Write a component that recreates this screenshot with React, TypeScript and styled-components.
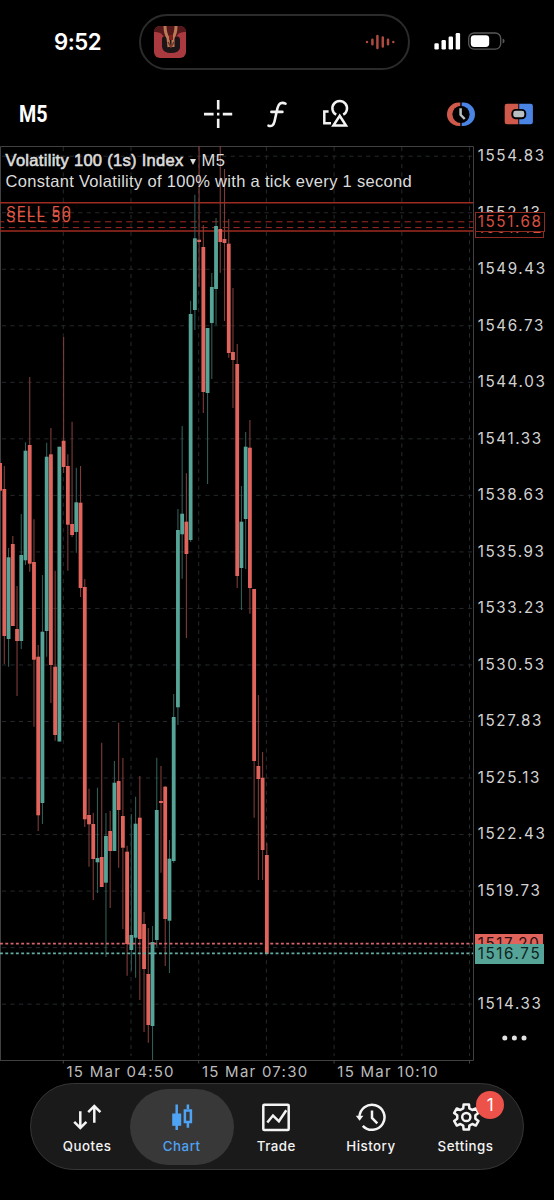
import React from 'react';
import styled, { createGlobalStyle } from 'styled-components';

const GlobalStyle = createGlobalStyle`
  * { box-sizing: border-box; }
  body { margin: 0; background: #000; }
`;

const RED = '#e0645c';
const TEAL = '#56a497';
const ORDER = '#9e2b20';
const TEXT = '#d2d2d2';
const ui = `Inter, Roboto, sans-serif`;

const Screen = styled.div`
  width: 554px;
  height: 1200px;
  background: #000;
  color: #fff;
  font-family: ${ui};
  display: flex;
  flex-direction: column;
  overflow: hidden;
`;

const StatusBar = styled.header`
  height: 82px;
  flex: none;
  display: grid;
  grid-template-columns: 139px 271px 1fr;
  align-items: start;
`;
const Clock = styled.div`
  padding: 27px 0 0 54px;
  font-size: 22.2px;
  line-height: 29px;
  font-weight: 600;
  letter-spacing: -0.5px;
`;
const Island = styled.div`
  height: 56px;
  margin-top: 14px;
  border: 2px solid #2b2b2b;
  border-radius: 28px;
  display: flex;
  align-items: center;
  justify-content: space-between;
  padding: 0 13px;
`;
const StatusIcons = styled.div`
  padding: 31px 0 0 24px;
`;

const Toolbar = styled.nav`
  height: 64px;
  flex: none;
  display: flex;
  align-items: center;
  padding-left: 19px;
`;
const Timeframe = styled.div`
  width: 183px;
  font: 700 24px/30px Roboto, sans-serif;
  transform: scaleX(0.82);
  transform-origin: left center;
`;
const ToolIcon = styled.svg<{ $gap?: number }>`
  display: block;
  flex: none;
  width: 32px;
  height: 32px;
  margin-left: ${(p) => p.$gap ?? 0}px;
`;

const ChartRow = styled.main`
  height: 915px;
  flex: none;
  display: grid;
  grid-template-columns: 474px 80px;
`;
const Plot = styled.section`
  position: relative;
`;
const PlotSvg = styled.svg`
  display: block;
`;
const Heading = styled.div`
  position: absolute;
  left: 5.5px;
  top: 4px;
  font: 16.5px/21px 'Liberation Sans', Arial, sans-serif;
  color: #dcdcdc;
  white-space: nowrap;
`;
const Title = styled.div`
  display: flex;
  align-items: center;
  letter-spacing: 0.3px;
`;
const Symbol = styled.span`
  -webkit-text-stroke: 0.6px #dcdcdc;
`;
const Caret = styled.span`
  margin: 3px 6px 0 6px;
  border: 3.5px solid transparent;
  border-top: 6px solid #dcdcdc;
  border-bottom: 0;
`;
const Description = styled.div`
  letter-spacing: 0.31px;
`;
const OrderLabel = styled.div<{ $top: number }>`
  position: absolute;
  left: 6px;
  top: ${(p) => p.$top}px;
  font-size: 15px;
  line-height: 20px;
  letter-spacing: 1.1px;
  color: #dc5443;
`;

const PriceAxis = styled.aside`
  position: relative;
`;
const PriceLabel = styled.div<{ $first?: boolean }>`
  height: ${(p) => (p.$first ? 38.26 : 56.53)}px;
  display: flex;
  align-items: ${(p) => (p.$first ? 'flex-start' : 'center')};
  padding-left: 3.7px;
  font-size: 15.2px;
  line-height: 20px;
  letter-spacing: 1.6px;
  color: ${TEXT};
`;
const PriceTag = styled.div<{ $top: number; $bg: string; $fg: string; $border: string; $width?: number }>`
  position: absolute;
  left: 1px;
  top: ${(p) => p.$top}px;
  width: ${(p) => p.$width ?? 69}px;
  height: 20px;
  padding-left: 1.7px;
  border: 1px solid ${(p) => p.$border};
  background: ${(p) => p.$bg};
  color: ${(p) => p.$fg};
  font-size: 15.2px;
  line-height: 18px;
  letter-spacing: 1.6px;
`;
const More = styled.svg`
  position: absolute;
  left: 27px;
  top: 887px;
`;

const TimeAxis = styled.div`
  height: 22px;
  flex: none;
  display: grid;
  grid-template-columns: repeat(3, 135.4px);
  padding-left: 66.5px;
  font-size: 15px;
  line-height: 21px;
  letter-spacing: 1.25px;
  color: #bcbcbc;
  white-space: nowrap;
`;

const TabBar = styled.nav`
  width: 494px;
  height: 87px;
  flex: none;
  margin-left: 30px;
  padding: 0 8.8px;
  border: 1px solid #363636;
  border-radius: 44px;
  background: #1a1a1a;
  display: flex;
  align-items: center;
`;
const Tab = styled.div<{ $active?: boolean }>`
  position: relative;
  flex: none;
  width: ${(p) => (p.$active ? 104 : 94.6)}px;
  margin: 0 ${(p) => (p.$active ? -4.7 : 0)}px;
  height: 76px;
  border-radius: 38px;
  background: ${(p) => (p.$active ? '#383838' : 'transparent')};
  color: ${(p) => (p.$active ? '#4fa3f5' : '#f4f4f4')};
  display: flex;
  flex-direction: column;
  align-items: center;
  padding-top: 12px;
  font-size: 13.3px;
  line-height: 17px;
  font-weight: 550;
  letter-spacing: 0.5px;
`;
const TabIcon = styled.svg`
  width: 32px;
  height: 32px;
  margin-bottom: 5px;
`;
const Badge = styled.span`
  position: absolute;
  left: 58.2px;
  top: 2px;
  width: 28px;
  height: 28px;
  border-radius: 50%;
  background: #ec5249;
  color: #fff;
  font-size: 17px;
  font-weight: 400;
  line-height: 28px;
  text-align: center;
`;

/* up flag, high, body top, body bottom, low — in screen units, one entry per bar */
type Bar = [0 | 1, number, number, number, number];
const bars: Bar[] = [
  [0, 463, 463, 490.7, 490.7], [0, 466, 489, 636, 664], [1, 548, 557.3, 639, 666.7], [0, 536, 544, 626, 626],
  [0, 586, 629, 641, 696], [1, 514, 555, 641, 649], [1, 442.3, 450.7, 560.3, 565], [0, 377, 445, 563.7, 571.7],
  [0, 519.3, 562, 659.7, 726.7], [0, 645, 656.7, 815.3, 831], [1, 575, 631.7, 803, 824], [1, 442.7, 456.7, 631, 656.7],
  [0, 428, 454.3, 665, 703], [0, 570.7, 666.7, 735, 740.7], [1, 446.7, 446.7, 741.5, 741.5], [0, 337, 440.7, 467, 473],
  [0, 454.3, 466, 524.7, 570.7], [0, 421.7, 524, 535, 537], [1, 467.7, 502.3, 532, 552.7], [0, 466, 502.7, 588, 597],
  [0, 579, 587, 819.3, 827], [0, 788.7, 815, 824.3, 866.7], [0, 812.7, 824, 859, 900], [1, 787.7, 858, 862.3, 893],
  [0, 742.7, 857, 887, 887], [1, 813, 836, 882.7, 957], [0, 810.7, 831, 851, 908], [1, 761, 782.7, 851, 851],
  [0, 722.7, 781, 810, 867.7], [0, 758, 816, 847.7, 929], [0, 845.7, 851.7, 944, 975.7], [1, 814, 935, 950, 970.7],
  [1, 796.7, 823.7, 937.7, 977.7], [0, 776, 817.7, 939, 1000], [0, 912, 924, 969, 1032], [0, 928, 974, 1025, 1042.7],
  [1, 926, 942, 1026, 1060], [1, 757.7, 810, 940, 946.7], [0, 766, 801, 803, 872.7], [0, 786, 786.7, 919, 966],
  [1, 840, 858.7, 920.7, 973], [1, 694, 717, 861, 862.7], [1, 509, 530, 707.3, 725], [1, 426, 513.7, 534.3, 578.7],
  [0, 473.3, 521.7, 554, 638], [1, 300.7, 314, 540, 542], [1, 194.7, 238.3, 310, 330], [0, 146, 239.7, 242, 286.7],
  [0, 225, 247, 392, 413], [1, 328, 328, 393, 484], [1, 273, 287, 323, 379], [1, 218, 226, 289, 325],
  [0, 146, 229, 242, 272.7], [0, 169, 239, 243, 321], [0, 219, 243.7, 353, 357.7], [0, 288, 352, 360, 408],
  [0, 344, 364, 576, 588], [1, 486, 521.7, 568, 610], [1, 432, 446.7, 519, 569], [0, 420, 447.7, 588, 613.7],
  [0, 589, 589, 761, 817.7], [0, 695, 766, 779, 880], [0, 752, 777.7, 850, 880], [0, 843, 855, 954, 954],
];

const TOP = 146;
const BAR_STEP = 4.234;
const gridYs = Array.from({ length: 16 }, (_, i) => 156.2 + i * 56.53);
const gridXs = Array.from({ length: 7 }, (_, i) => 63.3 + i * 67.7);
const prices = [
  '1554.83', '1552.13', '1549.43', '1546.73', '1544.03', '1541.33', '1538.63', '1535.93',
  '1533.23', '1530.53', '1527.83', '1525.13', '1522.43', '1519.73', '', '1514.33',
];

const CandleChart = () => (
  <PlotSvg width="474" height="918" viewBox={`0 ${TOP} 474 918`}>
    <g stroke="#25282b" strokeWidth="1" strokeDasharray="4.2 4.27">
      {gridYs.map((y) => <line key={y} x1="2" x2="474" y1={y} y2={y} />)}
      {gridXs.map((x) => <line key={x} x1={x} x2={x} y1="147" y2="1056" />)}
    </g>
    <g fill="none" stroke="#414144">
      <path d="M0.5 1060V146.5H473.5V1060.5H0" />
      {[0, 2, 4, 6].map((i) => <path key={i} d={`M${gridXs[i]} 1060v3.5`} />)}
    </g>
    <g stroke={ORDER} strokeWidth="1.6">
      <path d="M0 202.8H473M0 231H473" />
      <path d="M0 221.8H473M0 227.6H473" strokeWidth="1" strokeDasharray="6.3 4.4" strokeDashoffset="2" />
    </g>
    {bars.map(([up, high, open, close, low], i) => {
      const x = i * BAR_STEP + 0.1;
      return (
        <g key={i}>
          <line x1={x} x2={x} y1={high} y2={low} stroke={up ? '#2f5d55' : '#7e3c38'} strokeWidth="1.1" />
          <rect x={x - 1.9} y={open} width="3.8" height={close - open} fill={up ? TEAL : RED} />
        </g>
      );
    })}
    <g strokeWidth="1.7" strokeDasharray="2.9 2.4">
      <path d="M0 943.7H473" stroke="#d9646b" />
      <path d="M0 953.300H473" stroke="#62aea4" />
    </g>
  </PlotSvg>
);

const Artwork = () => (
  <svg width="32" height="32" viewBox="0 0 32 32">
    <clipPath id="cover"><rect width="32" height="32" rx="6" /></clipPath>
    <g clipPath="url(#cover)">
      <rect width="32" height="32" fill="#ab3a40" />
      <path d="M0 0h32v6q-8-1-10 6H10Q8 5 0 6z" fill="#54171a" />
      <path d="M8 12Q9 10 12 11L16 14L21 11Q26 9 26 14V22Q25 27 17 27Q9 27 8 21z" fill="#1c1517" />
      <path d="M11 0Q11 7 14 12L15 21M22 0Q22 7 19 12L19 21" fill="none" stroke="#b97a56" strokeWidth="3" />
      <path d="M15 9h4v5h-4z" fill="#7b201f" />
      <path d="M14 16l3 5 3-5" fill="none" stroke="#7a382b" strokeWidth="1.5" />
    </g>
  </svg>
);

const Wave = () => (
  <svg width="30" height="16" viewBox="0 0 30 16" stroke="#ad4a41" strokeWidth="2.5" strokeLinecap="round">
    <path d="M2 8v.1M7.4 5.8v4.4M12.4 2v12M17.8 3.4v9.2M23 5.8v4.4M28.3 8v.1" />
  </svg>
);

const SignalAndBattery = () => (
  <svg width="76" height="22" viewBox="434 31 76 22">
    <g fill="#fff">
      <rect x="434.4" y="43.2" width="4.4" height="6.2" rx="1.2" />
      <rect x="441.5" y="40" width="4.4" height="9.4" rx="1.2" />
      <rect x="448.6" y="36.6" width="4.4" height="12.8" rx="1.2" />
      <rect x="455.7" y="33" width="4.4" height="16.4" rx="1.2" />
      <rect x="470.8" y="35.2" width="18.4" height="11.8" rx="3.4" />
    </g>
    <rect x="468.7" y="33" width="32" height="16.2" rx="5.4" fill="none" stroke="#59595b" strokeWidth="1.3" />
    <path d="M502.6 38.6q2 .8 2 2.5t-2 2.5z" fill="#59595b" />
  </svg>
);

const Tools = () => (
  <>
    <ToolIcon viewBox="202 98 32 32" stroke="#f2f2f2" strokeWidth="2.6">
      <path d="M218.2 100v9.4M218.2 118.8v9.2M204 114.1h9.6M222.8 114.1h9.4M217 114.1h2.4" />
    </ToolIcon>
    <ToolIcon $gap={27} viewBox="261 98 32 32" fill="none" stroke="#f2f2f2" strokeWidth="2.6">
      <path d="M285.5 103.6c-4.2-2-7 .2-8 4.4L274.5 121.5c-.9 4-3 5.2-6 4.2M271.4 111.9h11" strokeLinecap="round" />
    </ToolIcon>
    <ToolIcon $gap={27} viewBox="320 98 32 32" fill="none" stroke="#f2f2f2" strokeWidth="2.5">
      <path d="M328.6 111.6H324.3V123.2H331" />
      <path d="M336.2 114.7A7.3 7.3 0 1 1 343.2 114.7" />
      <path d="M339.7 115.8L346 125.6H333.4Z" />
    </ToolIcon>
    <ToolIcon $gap={93} viewBox="445 98 32 32">
      <path d="M460.3 102.6H458.7a11.7 11.7 0 0 0 0 23.4H460.3z" fill="#cf5a4b" />
      <path d="M461.7 102.6H463.3a11.7 11.7 0 0 1 0 23.4H461.7z" fill="#4a84e4" />
      <circle cx="461" cy="114.3" r="8.6" fill="#000" />
      <path d="M460.6 108.3V114.8L464.7 119" fill="none" stroke="#b9c0c4" strokeWidth="2.5" />
    </ToolIcon>
    <ToolIcon $gap={26} viewBox="503 98 32 32">
      <path d="M518.3 103.8H507a2.3 2.3 0 0 0-2.3 2.3V122a2.3 2.3 0 0 0 2.3 2.3H518.3z" fill="#cf5a4b" />
      <path d="M519.2 103.8H530.6a2.3 2.3 0 0 1 2.3 2.3V122a2.3 2.3 0 0 1-2.3 2.3H519.2z" fill="#4a84e4" />
      <rect x="512.3" y="109.9" width="13" height="8.4" rx="3.4" fill="#b9c0c4" stroke="#000" strokeWidth="1.9" />
    </ToolIcon>
  </>
);

const gear = (() => {
  const pts: string[] = [];
  const teeth = 6;
  for (let i = 0; i < teeth; i++) {
    const mid = (i * 2 * Math.PI) / teeth - Math.PI / 2;
    ([[-0.34, 9.2], [-0.21, 12.8], [0.21, 12.8], [0.34, 9.2]] as const).forEach(([a, r]) => {
      pts.push(`${(16.3 + Math.cos(mid + a) * r).toFixed(2)} ${(16 + Math.sin(mid + a) * r).toFixed(2)}`);
    });
  }
  return `M${pts.join('L')}Z`;
})();

const stroke = { fill: 'none', stroke: 'currentColor', strokeWidth: 2.5 };

const tabs = [
  {
    name: 'Quotes',
    icon: <path {...stroke} d="M9.3 10.2V26.5M3.2 20.9L9.3 27L15.4 20.9M23.3 21.7V5.3M17.2 11.2L23.3 5L29.4 11.2" />,
  },
  {
    name: 'Chart',
    icon: (
      <>
        <path {...stroke} d="M10.7 3.5V29M21.9 3.5V8M21.9 21.5V26.8" />
        <path fill="currentColor" d="M6.2 12.5h9v12.3h-9z" />
        <path {...stroke} d="M18.9 9.5h6v11.4h-6z" />
      </>
    ),
  },
  {
    name: 'Trade',
    icon: (
      <>
        <rect {...stroke} x="3.3" y="3.8" width="25.4" height="25.2" rx="1" />
        <path {...stroke} d="M7.3 21.5L13 14.5L18.9 20.3L26.3 9.3" />
      </>
    ),
  },
  {
    name: 'History',
    icon: (
      <>
        <path {...stroke} d="M4.5 16.3A12.5 12.5 0 1 1 7.8 24.8" />
        <path fill="currentColor" d="M.8 14.8H8.4L4.6 19.8z" />
        <path {...stroke} d="M17 9.5V17L22.3 22.3" />
      </>
    ),
  },
  {
    name: 'Settings',
    badge: '1',
    icon: (
      <>
        <path {...stroke} d={gear} strokeLinejoin="round" />
        <circle {...stroke} cx="16.3" cy="16" r="4.1" />
      </>
    ),
  },
];

export default function App() {
  return (
    <Screen>
      <GlobalStyle />
      <StatusBar>
        <Clock>9:52</Clock>
        <Island>
          <Artwork />
          <Wave />
        </Island>
        <StatusIcons><SignalAndBattery /></StatusIcons>
      </StatusBar>
      <Toolbar>
        <Timeframe>M5</Timeframe>
        <Tools />
      </Toolbar>
      <ChartRow>
        <Plot>
          <CandleChart />
          <Heading>
            <Title><Symbol>Volatility 100 (1s) Index</Symbol><Caret />M5</Title>
            <Description>Constant Volatility of 100% with a tick every 1 second</Description>
          </Heading>
          <OrderLabel $top={55.5}>SELL 50</OrderLabel>
          <OrderLabel $top={61}>SELL 50</OrderLabel>
        </Plot>
        <PriceAxis>
          {prices.map((p, i) => <PriceLabel key={i} $first={i === 0}>{p}</PriceLabel>)}
          <PriceTag $top={71.5} $bg="#000" $fg="#d84f42" $border="#8e2a20">1551.42</PriceTag>
          <PriceTag $top={66} $bg="#000" $fg="#d84f42" $border="#8e2a20" $width={70}>1551.68</PriceTag>
          <PriceTag $top={788} $bg={RED} $fg="#2a0d0c" $border={RED} $width={68}>1517.20</PriceTag>
          <PriceTag $top={797.5} $bg={TEAL} $fg="#0c2421" $border={TEAL}>1516.75</PriceTag>
          <More width="28" height="10" viewBox="0 0 28 10" fill="#e2e2e2">
            <circle cx="3.8" cy="5" r="2.5" /><circle cx="13.4" cy="5" r="2.5" /><circle cx="23" cy="5" r="2.5" />
          </More>
        </PriceAxis>
      </ChartRow>
      <TimeAxis>
        <span>15 Mar 04:50</span>
        <span>15 Mar 07:30</span>
        <span>15 Mar 10:10</span>
      </TimeAxis>
      <TabBar>
        {tabs.map((t) => (
          <Tab key={t.name} $active={t.name === 'Chart'}>
            <TabIcon viewBox="0 0 32 32">{t.icon}</TabIcon>
            {t.name}
            {t.badge && <Badge>{t.badge}</Badge>}
          </Tab>
        ))}
      </TabBar>
    </Screen>
  );
}
